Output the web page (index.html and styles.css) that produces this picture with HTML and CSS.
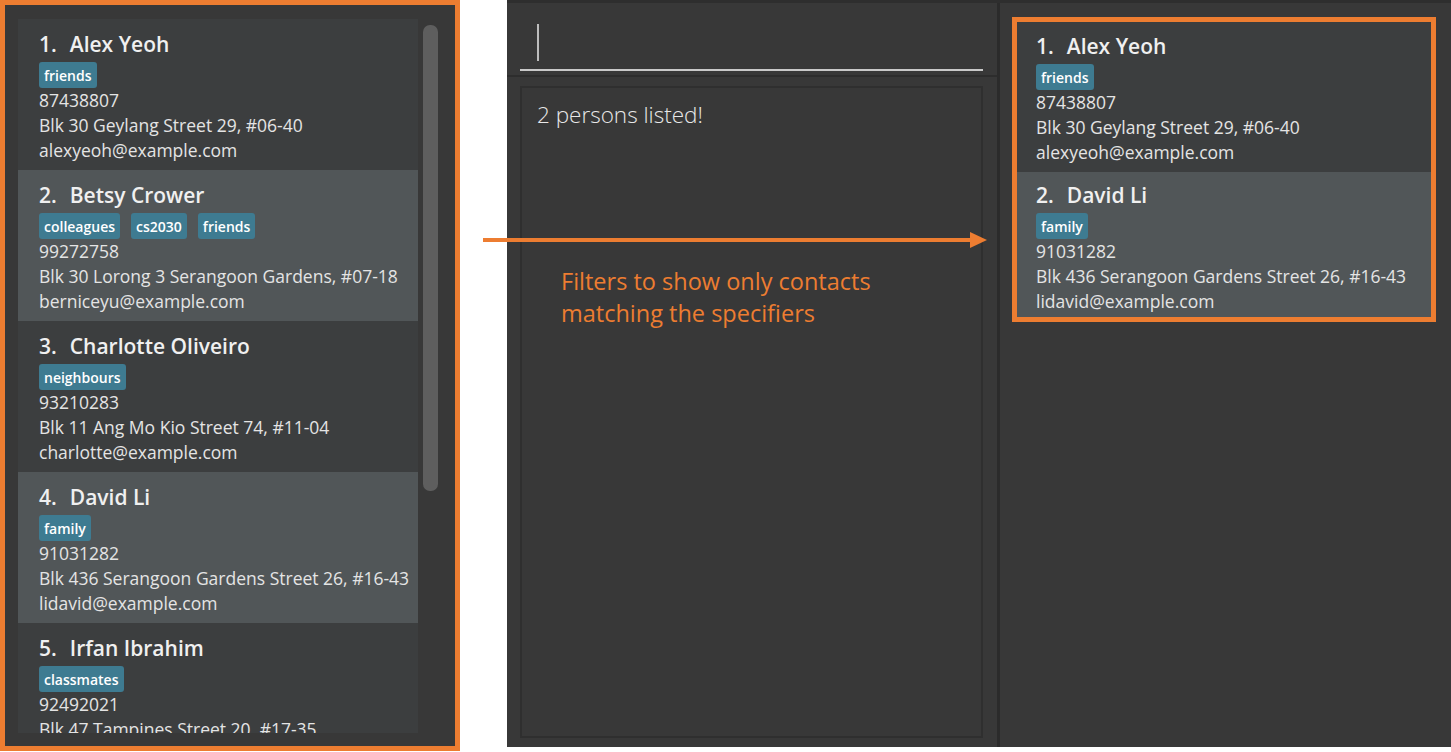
FILE: index.html
```html
<!DOCTYPE html>
<html lang="en">
<head>
<meta charset="utf-8">
<title>Find command</title>
<link rel="stylesheet" href="styles.css">
</head>
<body>
<div class="stage">
  <section class="before">
    <div class="list">
      <div class="card even">
        <div class="name"><span class="idx">1.</span>Alex Yeoh</div>
        <div class="tags"><span class="tag">friends</span></div>
        <div class="line">87438807</div>
        <div class="line">Blk 30 Geylang Street 29, #06-40</div>
        <div class="line">alexyeoh@example.com</div>
      </div>
      <div class="card odd">
        <div class="name"><span class="idx">2.</span>Betsy Crower</div>
        <div class="tags"><span class="tag">colleagues</span><span class="tag">cs2030</span><span class="tag">friends</span></div>
        <div class="line">99272758</div>
        <div class="line">Blk 30 Lorong 3 Serangoon Gardens, #07-18</div>
        <div class="line">berniceyu@example.com</div>
      </div>
      <div class="card even">
        <div class="name"><span class="idx">3.</span>Charlotte Oliveiro</div>
        <div class="tags"><span class="tag">neighbours</span></div>
        <div class="line">93210283</div>
        <div class="line">Blk 11 Ang Mo Kio Street 74, #11-04</div>
        <div class="line">charlotte@example.com</div>
      </div>
      <div class="card odd">
        <div class="name"><span class="idx">4.</span>David Li</div>
        <div class="tags"><span class="tag">family</span></div>
        <div class="line">91031282</div>
        <div class="line">Blk 436 Serangoon Gardens Street 26, #16-43</div>
        <div class="line">lidavid@example.com</div>
      </div>
      <div class="card even">
        <div class="name"><span class="idx">5.</span>Irfan Ibrahim</div>
        <div class="tags"><span class="tag">classmates</span></div>
        <div class="line">92492021</div>
        <div class="line">Blk 47 Tampines Street 20, #17-35</div>
      </div>
    </div>
    <div class="scrollbar"><div class="thumb"></div></div>
  </section>

  <div class="gap"></div>

  <section class="app">
    <div class="main">
      <div class="command">
        <div class="field"><span class="caret"></span></div>
      </div>
      <div class="result-pane">
        <div class="result">2 persons listed!</div>
      </div>
    </div>
    <div class="divider"></div>
    <div class="side">
      <div class="after">
        <div class="card even r1">
          <div class="name"><span class="idx">1.</span>Alex Yeoh</div>
          <div class="tags"><span class="tag">friends</span></div>
          <div class="line">87438807</div>
          <div class="line">Blk 30 Geylang Street 29, #06-40</div>
          <div class="line">alexyeoh@example.com</div>
        </div>
        <div class="card odd r2">
          <div class="name"><span class="idx">2.</span>David Li</div>
          <div class="tags"><span class="tag">family</span></div>
          <div class="line">91031282</div>
          <div class="line">Blk 436 Serangoon Gardens Street 26, #16-43</div>
          <div class="line">lidavid@example.com</div>
        </div>
      </div>
    </div>
  </section>

  <div class="arrow"><span class="shaft"></span><span class="head"></span></div>
  <p class="note">Filters to show only contacts<br>matching the specifiers</p>
</div>
</body>
</html>
```
FILE: styles.css
```css
html, body {
  margin: 0;
  padding: 0;
  background: #ffffff;
}

.stage {
  position: relative;
  width: 1451px;
  height: 752px;
  display: flex;
  align-items: flex-start;
  font-family: "Open Sans", "Noto Sans", sans-serif;
  overflow: hidden;
}

/* ---------- left: full list ---------- */
.before {
  flex: 0 0 460px;
  height: 751px;
  box-sizing: border-box;
  border: 5px solid #ed7d31;
  background: #383838;
  padding: 14px 0 0 13px;
  display: flex;
  gap: 5px;
}

.list {
  width: 400px;
  height: 714px;
  overflow: hidden;
}

.scrollbar {
  width: 15px;
  padding-top: 6px;
}

.thumb {
  width: 15px;
  height: 466px;
  border-radius: 7px;
  background: #5e5e5e;
}

/* ---------- cards ---------- */
.card {
  height: 151px;
  box-sizing: border-box;
  padding: 10px 0 0 21px;
  color: #e4e4e4;
  overflow: hidden;
}

.card.even { background: #3c3e3f; }
.card.odd { background: #515658; }

.name {
  font-size: 21px;
  font-weight: 600;
  line-height: 30px;
  color: #f0f0f0;
  white-space: nowrap;
}

.idx {
  margin-right: 13px;
}

.tags {
  display: flex;
  gap: 11px;
  margin-top: 3px;
  height: 26px;
}

.tag {
  display: inline-flex;
  align-items: center;
  height: 26px;
  padding: 0 5px;
  border-radius: 3px;
  background: #3e7b91;
  color: #ffffff;
  font-size: 14px;
  font-weight: 600;
}

.line {
  font-size: 17.5px;
  line-height: 25px;
  white-space: nowrap;
}

/* ---------- middle ---------- */
.gap {
  flex: 0 0 47px;
}

.app {
  flex: 1;
  height: 747px;
  box-sizing: border-box;
  border-top: 3px solid #2e2e2e;
  background: #383838;
  display: flex;
}

.main {
  flex: 0 0 490px;
  display: flex;
  flex-direction: column;
}

.command {
  height: 74px;
  box-sizing: border-box;
  border-bottom: 2px solid #2d2d2d;
  padding: 0 14px 0 13px;
}

.field {
  height: 68px;
  box-sizing: border-box;
  border-bottom: 2px solid #c9c9c9;
  padding: 21px 0 0 17px;
}

.caret {
  display: block;
  width: 2px;
  height: 37px;
  background: #bdbdbd;
}

.result-pane {
  flex: 1;
  padding: 9px 14px 9px 13px;
  display: flex;
}

.result {
  flex: 1;
  box-sizing: border-box;
  border: 2px solid #2f2f2f;
  padding: 9px 0 0 15px;
  color: #e8e8e8;
  font-size: 22.5px;
  font-weight: 300;
  line-height: 36px;
}

.divider {
  flex: 0 0 3px;
  background: #2b2b2b;
}

/* ---------- right: filtered list ---------- */
.side {
  flex: 1;
  padding: 14px 0 0 12px;
}

.after {
  width: 424px;
  box-sizing: border-box;
  border: 5px solid #ed7d31;
}

.after .card {
  padding-left: 19px;
  padding-top: 9px;
}

.after .r1 { height: 150px; }
.after .r2 { height: 145px; padding-top: 8px; }

/* ---------- annotation ---------- */
.arrow {
  position: absolute;
  left: 483px;
  top: 232px;
  width: 504px;
  height: 16px;
  display: flex;
  align-items: center;
}

.shaft {
  flex: 1;
  height: 4px;
  background: #ed7d31;
}

.head {
  width: 0;
  height: 0;
  border-top: 8px solid transparent;
  border-bottom: 8px solid transparent;
  border-left: 17px solid #ed7d31;
}

.note {
  position: absolute;
  left: 561px;
  top: 265px;
  margin: 0;
  font-family: "Open Sans", "Noto Sans", sans-serif;
  font-size: 23.5px;
  line-height: 32px;
  color: #ed7d31;
}
```
